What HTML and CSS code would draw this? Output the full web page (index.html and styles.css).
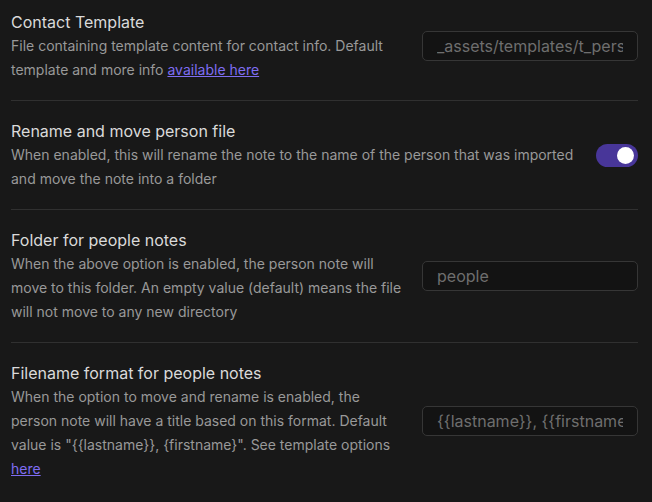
FILE: index.html
```html
<!DOCTYPE html>
<html lang="en">
<head>
<meta charset="utf-8">
<title>Settings</title>
<link rel="stylesheet" href="styles.css">
</head>
<body>
<div class="settings">
  <div class="setting-item first">
    <div class="info">
      <div class="name">Contact Template</div>
      <div class="desc">File containing template content for contact info. Default template and more info <a href="#">available here</a></div>
    </div>
    <div class="control">
      <input class="text-input" type="text" placeholder="_assets/templates/t_person.md">
    </div>
  </div>
  <div class="setting-item">
    <div class="info">
      <div class="name">Rename and move person file</div>
      <div class="desc">When enabled, this will rename the note to the name of the person that was imported and move the note into a folder</div>
    </div>
    <div class="control">
      <div class="toggle is-enabled"><span class="knob"></span></div>
    </div>
  </div>
  <div class="setting-item">
    <div class="info">
      <div class="name">Folder for people notes</div>
      <div class="desc">When the above option is enabled, the person note will move to this folder. An empty value (default) means the file will not move to any new directory</div>
    </div>
    <div class="control">
      <input class="text-input" type="text" placeholder="people">
    </div>
  </div>
  <div class="setting-item">
    <div class="info">
      <div class="name">Filename format for people notes</div>
      <div class="desc">When the option to move and rename is enabled, the person note will have a title based on this format. Default value is "{{lastname}}, {firstname}". See template options <a href="#">here</a></div>
    </div>
    <div class="control">
      <input class="text-input" type="text" placeholder="{{lastname}}, {{firstname}}">
    </div>
  </div>
</div>
</body>
</html>
```

FILE: styles.css
```css
html, body {
  margin: 0;
  padding: 0;
  background: #181818;
}
body {
  font-family: Inter, "Noto Sans", sans-serif;
  color: #dadada;
}
.settings {
  padding: 0 14px 0 11px;
}
.setting-item {
  display: flex;
  align-items: center;
  padding: 18px 0;
  border-top: 1px solid #303030;
}
.setting-item.first {
  border-top: none;
  padding-top: 10px;
}
.info {
  flex: 1 1 auto;
  margin-right: 16px;
}
.name {
  font-size: 16px;
  line-height: 24px;
  color: #dadada;
}
.desc {
  font-size: 14px;
  line-height: 24px;
  color: #999999;
}
.desc a {
  color: #7f6df2;
  text-decoration: underline;
}
.control {
  flex: 0 0 auto;
  display: flex;
  justify-content: flex-end;
}
.text-input {
  box-sizing: border-box;
  width: 216px;
  height: 30px;
  padding: 0 14px;
  font-family: Inter, "Noto Sans", sans-serif;
  font-size: 16px;
  color: #dadada;
  background: #131313;
  border: 1px solid #363636;
  border-radius: 5px;
  outline: none;
}
.text-input::placeholder {
  color: #6e6e6e;
  opacity: 1;
}
.toggle {
  position: relative;
  width: 42px;
  height: 23px;
  border-radius: 12px;
  background: #483699;
}
.knob {
  position: absolute;
  top: 3px;
  right: 4px;
  width: 17px;
  height: 17px;
  border-radius: 50%;
  background: #ffffff;
}
```
